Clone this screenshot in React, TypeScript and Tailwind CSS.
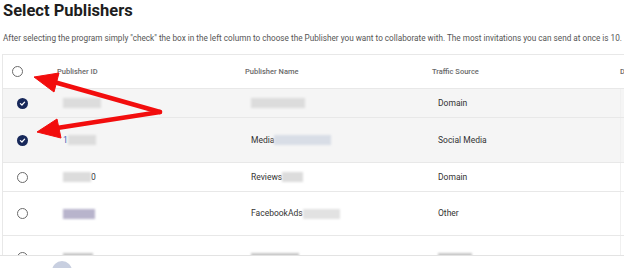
import React from "react";

type Row = {
  checked: boolean;
  h: string;
  id: React.ReactNode;
  name: React.ReactNode;
  source: React.ReactNode;
};

function Blur({ w, tint = "bg-[#dcdcdc]" }: { w: string; tint?: string }) {
  return <span className={`inline-block h-[10px] align-middle blur-[1px] ${w} ${tint}`} />;
}

function Check({ checked }: { checked: boolean }) {
  if (checked) {
    return (
      <span className="flex h-[11px] w-[11px] items-center justify-center rounded-full bg-[#17285a]">
        <svg width="7" height="7" viewBox="0 0 10 10">
          <path d="M2 5.2 L4.2 7.2 L8 3" fill="none" stroke="white" strokeWidth="1.8" strokeLinecap="round" strokeLinejoin="round" />
        </svg>
      </span>
    );
  }
  return <span className="block h-[11px] w-[11px] rounded-full border-[1.5px] border-[#6b6b6b]" />;
}

const rows: Row[] = [
  { checked: true, h: "h-[29px]", id: <Blur w="w-[38px]" />, name: <Blur w="w-[54px]" />, source: "Domain" },
  {
    checked: true,
    h: "h-[45px]",
    id: (
      <>
        <span className="text-[#3b5bb5]">1</span>
        <Blur w="w-[28px]" />
      </>
    ),
    name: (
      <>
        Media
        <Blur w="w-[57px]" tint="bg-[#d8dde6]" />
      </>
    ),
    source: "Social Media",
  },
  {
    checked: false,
    h: "h-[29px]",
    id: (
      <>
        <Blur w="w-[28px]" />0
      </>
    ),
    name: (
      <>
        Reviews
        <Blur w="w-[21px]" />
      </>
    ),
    source: "Domain",
  },
  {
    checked: false,
    h: "h-[44px]",
    id: <Blur w="w-[32px]" tint="bg-[#b8b4cc]" />,
    name: (
      <>
        FacebookAds
        <Blur w="w-[37px]" tint="bg-[#e2e2e2]" />
      </>
    ),
    source: "Other",
  },
  {
    checked: false,
    h: "h-[44px]",
    id: <Blur w="w-[30px]" tint="bg-[#c8c8c8]" />,
    name: <Blur w="w-[48px]" tint="bg-[#c8c8c8]" />,
    source: <Blur w="w-[34px]" tint="bg-[#c8c8c8]" />,
  },
];

export default function App() {
  return (
    <div className="relative h-[268px] w-[624px] overflow-hidden bg-white font-['Roboto',sans-serif] text-[#333]">
      <h1 className="pl-[3px] pt-[1px] text-[16.5px] font-bold leading-[20px] text-[#1d1d1d]">Select Publishers</h1>
      <p className="mt-[11px] whitespace-nowrap pl-[3px] text-[8.2px] leading-[12px] text-[#555]">
        After selecting the program simply "check" the box in the left column to choose the Publisher you want to
        collaborate with. The most invitations you can send at once is 10.
      </p>

      <div className="ml-[2px] mt-[10px] h-[201px] overflow-hidden border-l border-t border-[#e8e8e8]">
        <div className="grid h-[34px] grid-cols-[54px_188px_187px_188px_1fr] items-center border-b border-[#e8e8e8] text-[7.5px] font-medium text-[#6a6a6a]">
          <div className="pl-[9px]">
            <Check checked={false} />
          </div>
          <div>Publisher ID</div>
          <div>Publisher Name</div>
          <div>Traffic Source</div>
          <div>D</div>
        </div>
        {rows.map((r, i) => (
          <div
            key={i}
            className={`grid ${r.h} grid-cols-[54px_188px_187px_188px_1fr] items-center border-b border-[#e8e8e8] text-[8.5px] ${
              r.checked ? "bg-[#f5f5f5]" : "bg-white"
            }`}
          >
            <div className="pl-[14px]">
              <Check checked={r.checked} />
            </div>
            <div className="flex items-center pl-[6px]">{r.id}</div>
            <div className="flex items-center pl-[6px]">{r.name}</div>
            <div className="flex items-center pl-[6px]">{r.source}</div>
            <div className="h-full border-l border-[#f0f0f0]" />
          </div>
        ))}
      </div>

      <div className="border-t border-[#e3e3e3] pl-[52px] pt-[5px]">
        <div className="h-[20px] w-[20px] rounded-full bg-[#c8cfe0]" />
      </div>

      <svg className="pointer-events-none absolute left-0 top-0" width="624" height="268">
        <g fill="#f20d0d" stroke="#f20d0d" strokeLinejoin="round">
          <line x1="160" y1="112" x2="54" y2="82" strokeWidth="4.5" strokeLinecap="round" />
          <polygon points="34,77 59,73 54,92" strokeWidth="1" />
          <line x1="160" y1="112" x2="57" y2="128" strokeWidth="4.5" strokeLinecap="round" />
          <polygon points="37,132 57,119 61,138" strokeWidth="1" />
        </g>
      </svg>
    </div>
  );
}
